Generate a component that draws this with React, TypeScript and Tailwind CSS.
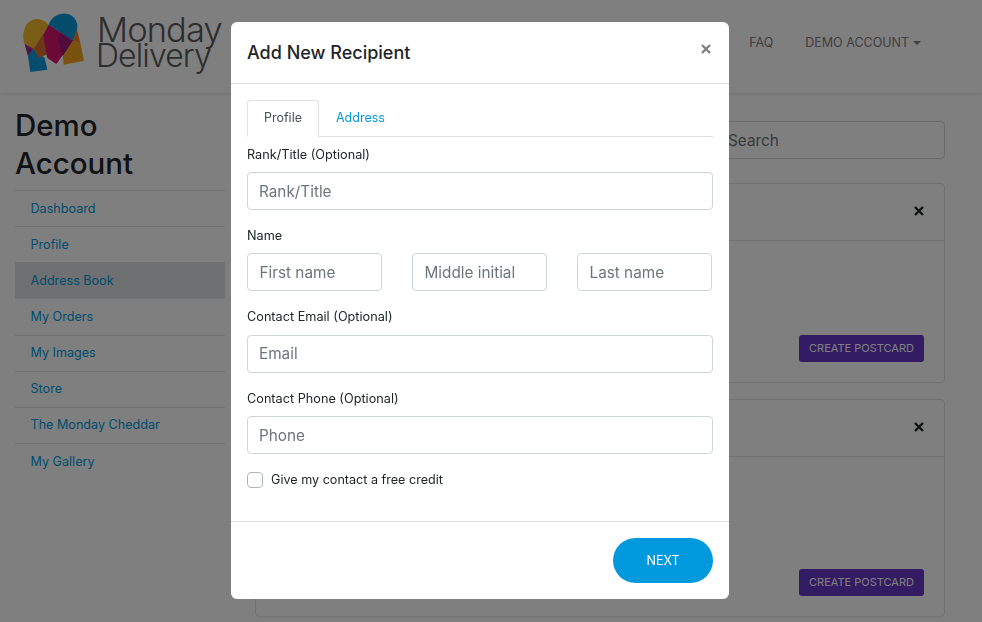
import React from "react";

const font = { fontFamily: '"Inter","Liberation Sans",sans-serif' };

function Logo() {
  return (
    <svg width="72" height="68" viewBox="0 0 216 204" className="shrink-0">
      <path d="M20 108 C8 70 25 35 55 33 C70 33 85 40 92 52 L47 122 L30 142 Z" fill="#f2b92a" />
      <path d="M20 108 L46 122 L30 145 Z" fill="#8c2f90" />
      <path d="M30 145 L46 122 L80 150 L88 185 L37 192 Z" fill="#0a9bdc" />
      <path d="M47 122 L75 78 L90 138 L62 150 Z" fill="#d9702a" />
      <path d="M92 50 C100 25 125 15 145 17 C170 20 182 45 177 65 L165 98 Z" fill="#0699d8" />
      <path d="M92 50 L165 98 L115 168 L88 150 L75 80 Z" fill="#d6156f" />
      <path d="M125 72 L165 98 L135 145 L120 95 Z" fill="#a11a78" />
      <path d="M177 65 L187 105 L165 98 Z" fill="#ee7a22" />
      <path d="M165 98 L187 105 L198 158 L137 170 L135 145 Z" fill="#f2a51e" />
    </svg>
  );
}

function CloseX({ className, color }: { className?: string; color: string }) {
  return (
    <svg width="10" height="10" viewBox="0 0 10 10" className={className}>
      <path d="M1 1 L9 9 M9 1 L1 9" stroke={color} strokeWidth="2.4" fill="none" />
    </svg>
  );
}

function Card({ className }: { className: string }) {
  return (
    <div className={`border border-[#dee2e6] rounded flex flex-col ${className}`}>
      <div className="h-[57px] shrink-0 border-b border-[#dee2e6] flex items-center justify-end pr-5">
        <CloseX color="#212529" className="-mt-[2px]" />
      </div>
      <div className="flex-1 flex items-end justify-end pr-5 pb-5">
        <button className="h-[27px] w-[125px] rounded-[3px] bg-[#6639c6] text-white text-[11px]">CREATE POSTCARD</button>
      </div>
    </div>
  );
}

const Field = ({ label, ph }: { label: string; ph: string }) => (
  <div className="mb-[17px]">
    <div className="text-[12.7px] leading-[19px] -mt-px mb-[8.33px] text-[#212529]">{label}</div>
    <div className="h-[38px] border border-[#ced4da] rounded flex items-center pl-[11px] pt-[2px] text-[15.3px] text-[#6c757d]">{ph}</div>
  </div>
);

const Small = ({ ph }: { ph: string }) => (
  <div className="w-[135px] h-[38px] border border-[#ced4da] rounded flex items-center pl-[11.5px] pt-[2px] text-[15.3px] text-[#6c757d]">{ph}</div>
);

export default function App() {
  const nav = ["Dashboard", "Profile", "Address Book", "My Orders", "My Images", "Store", "The Monday Cheddar", "My Gallery"];
  return (
    <div style={font} className="relative w-[982px] h-[622px] overflow-hidden bg-white">
      <header className="h-[93px] flex justify-between shadow-[0_1px_4px_rgba(0,0,0,0.12)] pl-[18px] pr-[61px]">
        <div className="flex items-start gap-[7px] pt-2">
          <Logo />
          <div className="text-[#5a5a5a] font-light mt-[7px]">
            <div className="text-[34.5px] leading-[27px] h-[27px] tracking-[-0.9px] pt-[1px]">Monday</div>
            <div className="text-[32px] leading-[25px] h-[25px] tracking-[-0.9px] pt-[1px] -ml-px">Delivery</div>
          </div>
        </div>
        <div className="flex items-center gap-8 text-[12.5px] text-[#808080] -mt-[7px]">
          <span>FAQ</span>
          <span className="flex items-center gap-1">DEMO ACCOUNT<span className="w-0 h-0 border-x-[4px] border-x-transparent border-t-[4px] border-t-[#808080]" /></span>
        </div>
      </header>
      <div className="flex pl-[15px] pr-[37px]">
        <aside className="w-[210px] shrink-0 mr-[30px]">
          <h2 className="text-[29.5px] leading-[38px] font-medium text-[#212529] mt-[13px] mb-[8px]">Demo<br />Account</h2>
          <nav>
            {nav.map((n) => (
              <div key={n} className={`h-[36.15px] border-t border-[#dee2e6] flex items-center pl-[15.5px] pt-px text-[12.6px] text-[#0099dd] ${n === "Address Book" ? "bg-[#dde0e3]" : ""}`}>{n}</div>
            ))}
          </nav>
        </aside>
        <main className="flex-1 pt-7">
          <div className="h-[38px] border border-[#ced4da] rounded flex items-center pl-[472px] pt-[2px] text-[15.3px] text-[#6c757d]">Search</div>
          <Card className="mt-[24px] h-[200px]" />
          <Card className="mt-[16px] h-[218px]" />
        </main>
      </div>
      <div className="fixed inset-0 bg-black/50" />
      <div className="absolute left-[231px] top-[22px] w-[498px] h-[577px] bg-white rounded-md flex flex-col text-[#212529]">
        <div className="h-[62px] shrink-0 border-b border-[#dee2e6] flex items-center justify-between pl-4 pr-[18px]">
          <span className="text-[18px] font-medium">Add New Recipient</span>
          <CloseX color="#808080" className="-mt-[7px]" />
        </div>
        <div className="flex-1 px-4 pt-4">
          <div className="flex h-[37px] border-b border-[#dee2e6] text-[12.5px]">
            <div className="w-[72px] h-[37px] border border-[#dee2e6] border-b-white rounded-t flex items-center justify-center text-[#495057]">Profile</div>
            <div className="px-[17px] flex items-center text-[#0099dd]">Address</div>
          </div>
          <div className="mt-[8.67px]"><Field label="Rank/Title (Optional)" ph="Rank/Title" /></div>
          <div className="mb-[17px]">
            <div className="text-[12.7px] leading-[19px] -mt-px mb-[8.33px]">Name</div>
            <div className="flex justify-between pr-px">
              <Small ph="First name" /><Small ph="Middle initial" /><Small ph="Last name" />
            </div>
          </div>
          <Field label="Contact Email (Optional)" ph="Email" />
          <Field label="Contact Phone (Optional)" ph="Phone" />
          <div className="flex items-center gap-2 text-[12.6px]">
            <span className="w-4 h-4 border border-[#adb5bd] rounded" />
            <span>Give my contact a free credit</span>
          </div>
        </div>
        <div className="h-[78px] shrink-0 border-t border-[#dee2e6] flex items-center justify-end pr-4">
          <button className="w-[100px] h-[45px] rounded-full bg-[#0099dd] text-white text-[12.5px] pt-px">NEXT</button>
        </div>
      </div>
    </div>
  );
}
